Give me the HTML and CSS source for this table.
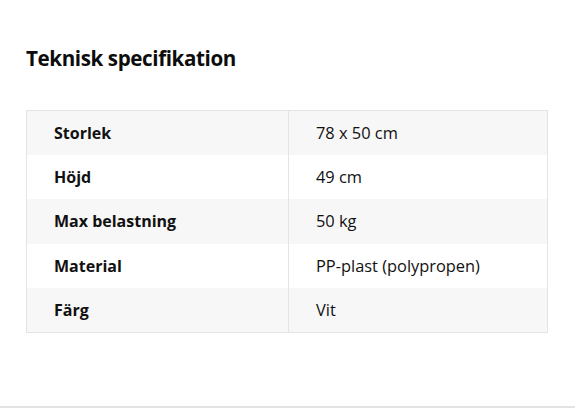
FILE: index.html
```html
<!DOCTYPE html>
<html lang="sv">
<head>
<meta charset="utf-8">
<title>Teknisk specifikation</title>
<link rel="stylesheet" href="styles.css">
</head>
<body>
<section class="spec">
  <h2 class="spec-title">Teknisk specifikation</h2>
  <table class="spec-table">
    <tbody>
      <tr><th>Storlek</th><td>78 x 50 cm</td></tr>
      <tr><th>Höjd</th><td>49 cm</td></tr>
      <tr><th>Max belastning</th><td>50 kg</td></tr>
      <tr><th>Material</th><td>PP-plast (polypropen)</td></tr>
      <tr><th>Färg</th><td>Vit</td></tr>
    </tbody>
  </table>
</section>
<div class="divider"></div>
</body>
</html>
```
FILE: styles.css
```css
html, body {
  margin: 0;
  padding: 0;
  background: #ffffff;
}
body {
  font-family: "Open Sans", "Noto Sans", sans-serif;
  color: #111111;
  width: 575px;
  height: 411px;
  overflow: hidden;
}
.spec {
  padding: 43px 27px 0 26px;
  height: 363px;
  box-sizing: border-box;
}
.spec-title {
  margin: 0;
  font-size: 20.6px;
  line-height: 30px;
  font-weight: 700;
  letter-spacing: -0.4px;
  color: #0d0d0d;
}
.spec-table {
  margin-top: 37px;
  width: 522px;
  border-collapse: collapse;
  border: 1px solid #e4e4e4;
  table-layout: fixed;
}
.spec-table tr:nth-child(odd) {
  background: #f7f7f7;
}
.spec-table th,
.spec-table td {
  height: 44.4px;
  padding: 0 0 0 27px;
  box-sizing: border-box;
  text-align: left;
  line-height: 22px;
  vertical-align: middle;
}
.spec-table th {
  width: 262px;
  font-size: 16px;
  font-weight: 700;
  border-right: 1px solid #e4e4e4;
}
.spec-table td {
  font-size: 16.4px;
  font-weight: 400;
}
.divider {
  margin-top: 43px;
  height: 2px;
  background: #e3e3e3;
}
```
